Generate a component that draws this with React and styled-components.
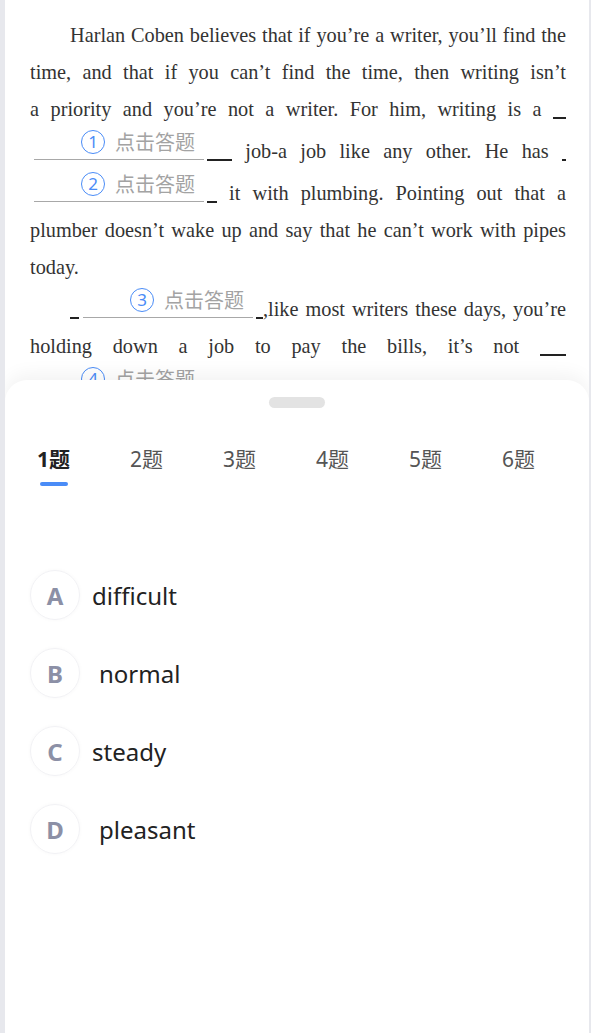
import React from "react";
import styled, { createGlobalStyle } from "styled-components";

const GlobalStyle = createGlobalStyle`
  html, body {
    margin: 0;
    padding: 0;
    background: #e7e8ed;
  }
`;

const Screen = styled.div`
  position: relative;
  height: 1033px;
  margin: 0 2px 0 5px;
  background: #fff;
  overflow: hidden;
`;

const Article = styled.div`
  padding: 17px 23px 0 25px;
`;

const Para = styled.p`
  margin: 0;
  font-family: "Liberation Serif", serif;
  font-size: 20.3px;
  line-height: 37px;
  color: #333;
  text-align: justify;
  text-indent: 40px;
`;

const Blank = styled.span`
  display: inline-block;
  width: 170px;
  height: 31px;
  overflow: hidden;
  text-indent: 0;
  border-bottom: 1px solid #a8a8a8;
  margin: 0 3px -2px 4px;
`;

const BlankInner = styled.span`
  display: flex;
  align-items: center;
  gap: 10px;
  height: 100%;
  padding-left: 47px;
  padding-bottom: 3px;
  box-sizing: border-box;
`;

const Num = styled.span`
  width: 22px;
  height: 22px;
  border: 1.5px solid #4a8cf7;
  border-radius: 50%;
  color: #4a8cf7;
  font-family: "Noto Sans", sans-serif;
  font-size: 17px;
  line-height: 22px;
  text-align: center;
`;

const Hint = styled.span`
  font-family: "Noto Sans CJK SC", sans-serif;
  font-size: 20px;
  line-height: 24px;
  color: #a3a3a3;
`;

const Mark = styled.span`
  display: inline-block;
  width: ${(p) => p.w}px;
  height: 0;
  border-bottom: 2px solid #222;
  margin-bottom: -3px;
`;

const Sheet = styled.div`
  position: absolute;
  top: 380px;
  left: 0;
  right: 0;
  bottom: 0;
  background: #fff;
  border-radius: 22px 22px 0 0;
  box-shadow: 0 -6px 18px rgba(0, 0, 0, 0.05);
`;

const Handle = styled.div`
  width: 56px;
  height: 11px;
  margin: 17px auto 0;
  border-radius: 6px;
  background: #e3e3e3;
`;

const Tabs = styled.div`
  display: flex;
  gap: 60px;
  margin-top: 39px;
  padding-left: 32px;
`;

const Tab = styled.div`
  display: flex;
  flex-direction: column;
  align-items: center;
  font-family: "Noto Sans", "Noto Sans CJK SC", sans-serif;
  font-size: 21px;
  line-height: 24px;
  font-weight: ${(p) => (p.active ? 700 : 400)};
  color: ${(p) => (p.active ? "#222" : "#555")};
`;

const TabLine = styled.div`
  width: 28px;
  height: 4px;
  margin-top: 11px;
  border-radius: 2px;
  background: ${(p) => (p.active ? "#4a8cf7" : "transparent")};
`;

const Options = styled.div`
  display: flex;
  flex-direction: column;
  gap: 28px;
  margin-top: 84px;
  padding-left: 25px;
`;

const Option = styled.div`
  display: flex;
  align-items: center;
  height: 50px;
`;

const Letter = styled.div`
  width: 48px;
  height: 48px;
  border: 1px solid #f2f2f5;
  border-radius: 50%;
  box-shadow: 0 0 4px rgba(0, 0, 0, 0.03);
  display: flex;
  align-items: center;
  justify-content: center;
  font-family: "Noto Sans", sans-serif;
  font-weight: 700;
  font-size: 24px;
  color: #8c90a6;
`;

const OptionText = styled.div`
  margin-left: ${(p) => 12 + (p.shift || 0)}px;
  font-family: "Noto Sans", sans-serif;
  font-size: 24px;
  color: #222;
`;

function Gap({ n }) {
  return (
    <Blank>
      <BlankInner>
        <Num>{n}</Num>
        <Hint>点击答题</Hint>
      </BlankInner>
    </Blank>
  );
}

const tabs = ["1题", "2题", "3题", "4题", "5题", "6题"];

const options = [
  { key: "A", text: "difficult", shift: 0 },
  { key: "B", text: "normal", shift: 7 },
  { key: "C", text: "steady", shift: 0 },
  { key: "D", text: "pleasant", shift: 7 },
];

export default function App() {
  return (
    <Screen>
      <GlobalStyle />
      <Article>
        <Para>
          Harlan Coben believes that if you’re a writer, you’ll find the time, and that if you can’t find the time, then writing isn’t a{"\u00A0"}priority and you’re not a writer. For him, writing is a <Mark w={13} /><Gap n={1} /><Mark w={25} /> job-a job like any other. He has <Mark w={4} /><Gap n={2} /><Mark w={10} /> it with plumbing. Pointing out that a plumber doesn’t wake up and say that he can’t work with pipes today.
        </Para>
        <Para>
          <Mark w={9} /><Gap n={3} /><Mark w={7} />,like most writers these days, you’re holding down a job to pay the bills, it’s not <Mark w={26} /><Gap n={4} /><Mark w={10} /> to write less.
        </Para>
      </Article>
      <Sheet>
        <Handle />
        <Tabs>
          {tabs.map((t, i) => (
            <Tab key={t} active={i === 0}>
              {t}
              <TabLine active={i === 0} />
            </Tab>
          ))}
        </Tabs>
        <Options>
          {options.map((o) => (
            <Option key={o.key}>
              <Letter>{o.key}</Letter>
              <OptionText shift={o.shift}>{o.text}</OptionText>
            </Option>
          ))}
        </Options>
      </Sheet>
    </Screen>
  );
}
